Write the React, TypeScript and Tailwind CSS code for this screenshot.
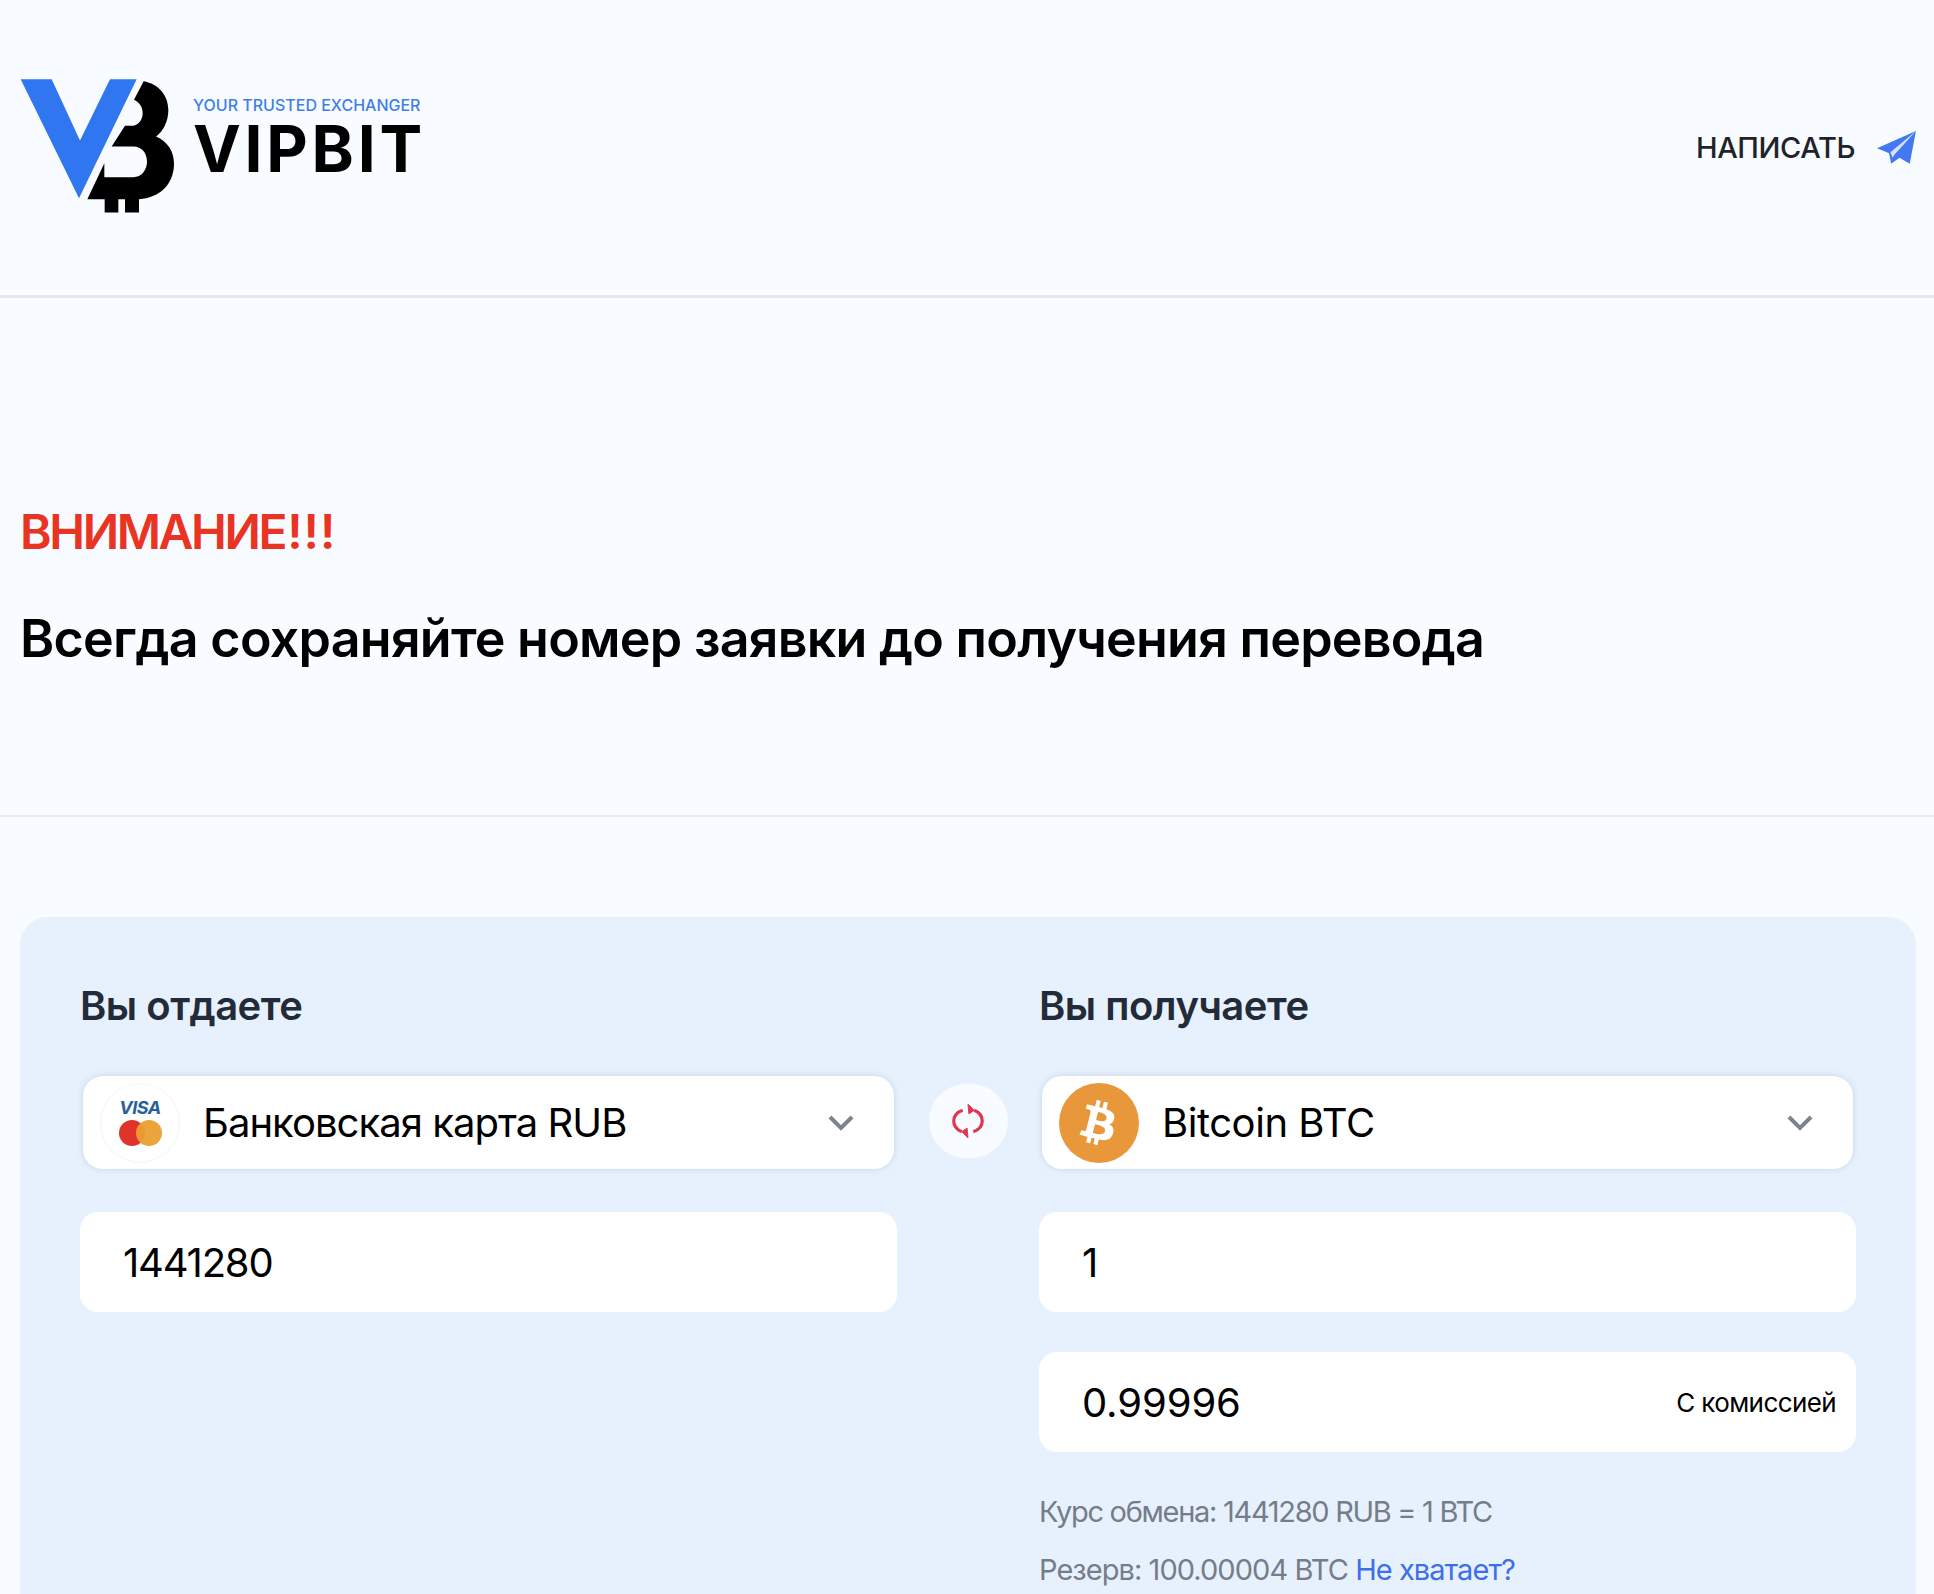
import React from "react";
import { FaBtc } from "react-icons/fa";

const font = { fontFamily: "Inter, 'Noto Sans', sans-serif" };

const Logo: React.FC = () => (
  <div className="flex items-center">
    <svg className="mb-[4px]" width="155" height="136" viewBox="60 85 465 407">
      <path d="M62 88H155L240 272L330 88H410L237 445Z" fill="#2f76f0" />
      <path
        d="M431 94C475 102 505 135 505 180C505 215 490 245 468 260C503 275 523 305 522 345C520 405 478 445 417 448V488H375V448H355V488H314V448H262L313 340V382H400C425 382 441 360 441 335C441 310 425 290 400 290H335L375 228H392C415 228 428 210 428 190C428 170 418 158 402 150Z"
        fill="#000"
      />
    </svg>
    <div className="ml-[18px] mb-[23px] flex flex-col">
      <span className="text-[16px] leading-[16px] font-medium text-[#3f7fe8] whitespace-nowrap">
        YOUR TRUSTED EXCHANGER
      </span>
      <span className="mt-[10px] text-[64px] leading-[52px] font-bold text-black tracking-[3.8px]">
        VIPBIT
      </span>
    </div>
  </div>
);

const Plane: React.FC = () => (
  <svg width="39" height="33" viewBox="655 90 113 96">
    <path d="M768 90L655 140L690 155L696 185L720 168L750 185Z" fill="#4477f2" />
    <path d="M768 90L694 152L700 168L706 158Z" fill="#d5e2fc" />
  </svg>
);

const Chevron: React.FC = () => (
  <svg width="26" height="18" viewBox="0 0 26 18" fill="none">
    <path d="M2 3L13 14L24 3" stroke="#7d8490" strokeWidth="4" />
  </svg>
);

const SwapIcon: React.FC = () => (
  <svg width="32" height="38" viewBox="0 0 36 40" fill="none" stroke="#e0354f" strokeWidth="3.6">
    <path d="M12 8C6 10 2 14 2 20C2 26 6 30 11 32" />
    <path d="M24 32C30 30 34 26 34 20C34 14 30 10 25 8" />
    <path d="M18 1L25 8L19 12Z" fill="#e0354f" strokeWidth="1" />
    <path d="M18 39L11 32L17 28Z" fill="#e0354f" strokeWidth="1" />
  </svg>
);

const CardIcon: React.FC = () => (
  <div className="w-[80px] h-[80px] rounded-full border border-[#f3f5f8] bg-white flex flex-col items-center justify-center shrink-0">
    <span className="text-[18px] leading-[18px] font-bold italic text-[#2a5f9e] tracking-[-0.5px]">
      VISA
    </span>
    <div className="flex mt-[3px]">
      <div className="w-[26px] h-[26px] rounded-full bg-[#e0332a]" />
      <div className="w-[26px] h-[26px] rounded-full bg-[#eb9f33]/95 -ml-[9px]" />
    </div>
  </div>
);

const BtcIcon: React.FC = () => (
  <div className="w-[80px] h-[80px] rounded-full bg-[#e8973a] flex items-center justify-center shrink-0 text-white">
    <FaBtc className="rotate-[14deg]" size={44} />
  </div>
);

const Select: React.FC<{ icon: React.ReactNode; title: string; titleClass: string }> = ({ icon, title, titleClass }) => (
  <div className="mx-[3px] h-[93px] rounded-[20px] bg-white shadow-[0_0_6px_rgba(120,130,150,0.25)] flex items-center pl-[17px] pr-[40px]">
    {icon}
    <span className={`ml-[23px] flex-1 text-[40px] text-black whitespace-nowrap ${titleClass}`}>{title}</span>
    <Chevron />
  </div>
);

const Field: React.FC<{ value: string; valueClass: string; hint?: string }> = ({ value, valueClass, hint }) => (
  <div className="h-[100px] rounded-[18px] bg-white flex items-center justify-between pl-[43px] pr-[20px]">
    <span className={`text-[40px] text-black pt-[2px] ${valueClass}`}>{value}</span>
    {hint && <span className="text-[26px] tracking-[-0.6px] text-black">{hint}</span>}
  </div>
);

const App: React.FC = () => {
  return (
    <div className="w-[1934px] h-[1594px] overflow-hidden bg-[#f8fbff]" style={font}>
      <header className="h-[298px] pl-[20px] pr-[18px] border-b-[3px] border-[#e3e8ec] flex items-center justify-between">
        <Logo />
        <a className="flex items-center gap-[22px]">
          <span className="text-[29px] text-[#1f2329] font-medium tracking-[-0.4px]">НАПИСАТЬ</span>
          <Plane />
        </a>
      </header>

      <section className="h-[519px] border-b-2 border-[#e6eaee] pl-[20px] pt-[202px]">
        <h2 className="text-[48px] leading-[64px] font-semibold text-[#e93323] tracking-[-2.4px]">
          ВНИМАНИЕ<span className="tracking-[1px] ml-[2px]">!!!</span>
        </h2>
        <h3 className="mt-[43px] text-[52px] leading-[64px] font-semibold text-black tracking-[-0.75px] whitespace-nowrap">
          Всегда сохраняйте номер заявки до получения перевода
        </h3>
      </section>

      <main className="mt-[100px] mx-[20px] w-[1896px] rounded-[28px] bg-[#e7f1fd] pl-[60px] pt-[62px] pb-[60px] grid grid-cols-[817px_142px_817px]">
        <div>
          <div className="text-[40px] leading-[54px] font-semibold text-[#232a38] tracking-[-0.5px]">Вы отдаете</div>
          <div className="mt-[43px]">
            <Select icon={<CardIcon />} title="Банковская карта RUB" titleClass="tracking-[-0.95px]" />
          </div>
          <div className="mt-[43px]">
            <Field value="1441280" valueClass="tracking-[-1.2px]" />
          </div>
        </div>

        <div className="pt-[105px] flex justify-center items-start">
          <button className="w-[79px] h-[74px] rounded-full bg-[#f8fbff] flex items-center justify-center">
            <SwapIcon />
          </button>
        </div>

        <div>
          <div className="text-[40px] leading-[54px] font-semibold text-[#232a38] tracking-[-0.5px]">Вы получаете</div>
          <div className="mt-[43px]">
            <Select icon={<BtcIcon />} title="Bitcoin BTC" titleClass="tracking-[-0.45px]" />
          </div>
          <div className="mt-[43px]">
            <Field value="1" valueClass="tracking-[-0.8px]" />
          </div>
          <div className="mt-[40px]">
            <Field value="0.99996" valueClass="tracking-[-0.1px]" hint="С комиссией" />
          </div>
          <div className="mt-[40px] text-[29px] leading-[40px] tracking-[-1.3px] text-[#767d88]">
            Курс обмена: 1441280 RUB = 1 BTC
          </div>
          <div className="mt-[18px] text-[29px] leading-[40px] tracking-[-0.95px] text-[#767d88]">
            Резерв: 100.00004 BTC <a className="text-[#3d6fe8]">Не хватает?</a>
          </div>
        </div>
      </main>
    </div>
  );
};

export default App;
